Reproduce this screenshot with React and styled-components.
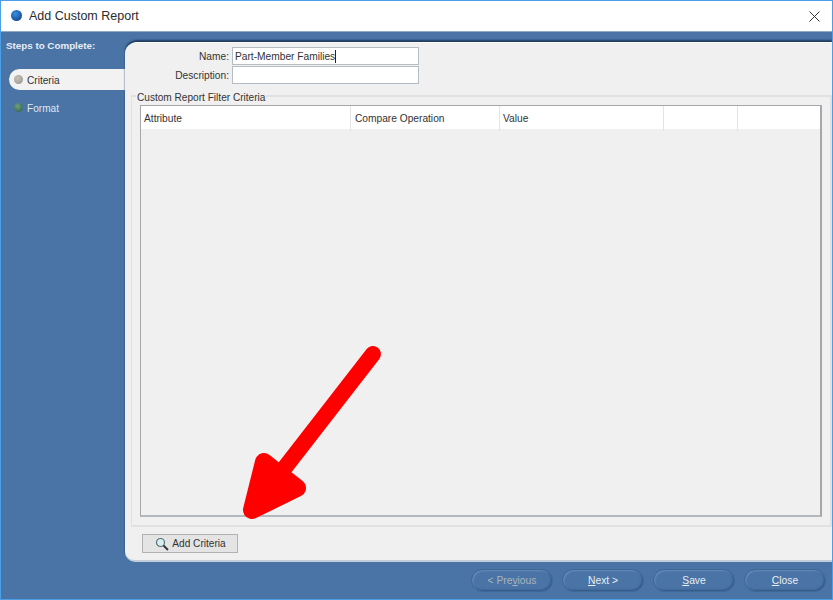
import React from 'react';
import styled, { createGlobalStyle } from 'styled-components';

const Global = createGlobalStyle`
  html, body { margin: 0; padding: 0; }
  body { font-family: "Liberation Sans", Arial, sans-serif; font-size: 11px; }
`;

const Window = styled.div`
  position: relative;
  box-sizing: border-box;
  width: 833px;
  height: 600px;
  border: 1px solid #4a9fe6;
  display: flex;
  flex-direction: column;
  background: #4a74a6;
  overflow: hidden;
`;

const TitleBar = styled.div`
  height: 30px;
  flex: none;
  background: #fff;
  display: flex;
  align-items: center;
  padding: 0 12px 0 10px;
  gap: 7px;
  font-size: 12.5px;
  color: #2b2b2b;
  border-bottom: 1px solid #8fa9c6;
`;

const AppDot = styled.span`
  width: 11px;
  height: 11px;
  border-radius: 50%;
  margin-top: -1px;
  background: radial-gradient(circle at 40% 35%, #3c8ee0, #17509c 70%, #1a3c68);
`;

const TitleText = styled.span`
  flex: 1;
`;

const Body = styled.div`
  flex: 1;
  display: flex;
  min-height: 0;
  padding-top: 10px;
`;

const Sidebar = styled.div`
  width: 124px;
  flex: none;
  padding-left: 8px;
  box-sizing: border-box;
`;

const StepsTitle = styled.div`
  color: #e6edf5;
  font-size: 9.8px;
  font-weight: bold;
  margin: -2px 0 0 -3px;
  height: 29px;
  line-height: 12px;
`;

const Step = styled.div`
  height: 21px;
  display: flex;
  align-items: center;
  gap: 4px;
  padding-left: 5px;
  margin-bottom: 7px;
  color: ${p => (p.$active ? '#333' : '#dfe7f0')};
  background: ${p => (p.$active ? '#f2f2f2' : 'transparent')};
  border-radius: 11px 0 0 11px;
  font-size: 10.1px;
`;

const StepLabel = styled.span`
  padding-top: 2px;
`;

const StepDot = styled.span`
  width: 9px;
  height: 9px;
  border-radius: 50%;
  background: ${p => (p.$active
    ? 'radial-gradient(circle at 40% 35%, #c4c2ba, #94928a)'
    : 'radial-gradient(circle at 40% 35%, #6fa080, #2b5a48)')};
`;

const Main = styled.div`
  flex: 1;
  display: flex;
  flex-direction: column;
  min-width: 0;
`;

const Panel = styled.div`
  height: 520px;
  box-sizing: border-box;
  background: #f0f0f0;
  border-radius: 12px 0 0 10px;
  border-top: 1px solid #fafafa;
  border-bottom: 2px solid #c4cedb;
  box-shadow: 0 -2px 2px #1f3a5c;
  padding: 4px 0 0 6px;
  display: flex;
  flex-direction: column;
`;

const FormRow = styled.div`
  display: flex;
  align-items: center;
  height: 18px;
  margin-bottom: 1px;
`;

const FieldLabel = styled.label`
  width: 101px;
  text-align: right;
  color: #333;
  font-size: 10.2px;
  padding-right: 3px;
  box-sizing: border-box;
`;

const Input = styled.div`
  width: 187px;
  height: 18px;
  box-sizing: border-box;
  background: #fff;
  border: 1px solid #b4bcc4;
  padding: 0 2px;
  color: #333;
  font-size: 10.2px;
  line-height: 17px;
  white-space: nowrap;
`;

const Caret = styled.span`
  display: inline-block;
  width: 1px;
  height: 13px;
  background: #222;
  vertical-align: -3px;
`;

const GroupBox = styled.fieldset`
  margin: 4px 0 0;
  padding: 2px 8px 8px;
  height: 438px;
  box-sizing: border-box;
  border: 1px solid #e1e1e1;
  border-width: 2px 2px 2px 1px;
  min-width: 0;
`;

const GroupLegend = styled.legend`
  color: #333;
  font-size: 10.1px;
  line-height: 11px;
  padding: 3px 1px 0;
  margin-left: -4px;
`;

const Table = styled.div`
  height: 412px;
  box-sizing: border-box;
  border: 1px solid #a4a8ad;
  border-right: 2px solid #a4a8ad;
  border-bottom: 2px solid #b4b8bc;
  background: #f0f0f0;
`;

const HeaderRow = styled.div`
  display: grid;
  grid-template-columns: 210px 149px 164px 74px 1fr;
  height: 23px;
  background: #fff;
`;

const HeaderCell = styled.div`
  border-right: 1px solid #e4e4e4;
  padding-left: 3px;
  color: #333;
  font-size: 10.2px;
  line-height: 25px;
  &:nth-child(2) { padding-left: 4px; }
  &:last-child { border-right: none; }
`;

const ActionBar = styled.div`
  padding: 7px 0 0 11px;
`;

const FlatButton = styled.button`
  width: 96px;
  height: 19px;
  box-sizing: border-box;
  display: flex;
  align-items: center;
  justify-content: center;
  gap: 3px;
  padding: 0 0 0 1px;
  background: #e4e4e4;
  border: 1px solid #b2b2b2;
  color: #333;
  font: 10.1px "Liberation Sans", Arial, sans-serif;
`;

const Footer = styled.div`
  flex: 1;
  display: flex;
  justify-content: flex-end;
  align-items: flex-start;
  gap: 9px;
  padding: 7px 6px 0 0;
`;

const PillButton = styled.button`
  width: 82px;
  height: 23px;
  box-sizing: border-box;
  border-radius: 11px;
  border: 1px solid #3f6896;
  background: #4a74a6;
  box-shadow: inset -1px -1px 2px #2f5585, inset 1px 1px 2px #6b90bb;
  color: ${p => (p.disabled ? '#a9b4bc' : '#e8eef5')};
  font: 10.3px "Liberation Sans", Arial, sans-serif;
  padding: 0;
  u { text-decoration: underline; }
`;

const Arrow = styled.svg`
  position: absolute;
  left: 237px;
  top: 339px;
  pointer-events: none;
`;

const columns = ['Attribute', 'Compare Operation', 'Value', '', ''];

const App = () => (
  <Window>
    <Global />
    <TitleBar>
      <AppDot />
      <TitleText>Add Custom Report</TitleText>
      <svg width="11" height="11" viewBox="0 0 11 11">
        <path d="M0.5 0.5 L10.5 10.5 M10.5 0.5 L0.5 10.5" stroke="#333" strokeWidth="1" />
      </svg>
    </TitleBar>
    <Body>
      <Sidebar>
        <StepsTitle>Steps to Complete:</StepsTitle>
        <Step $active><StepDot $active /><StepLabel>Criteria</StepLabel></Step>
        <Step><StepDot /><StepLabel>Format</StepLabel></Step>
      </Sidebar>
      <Main>
        <Panel>
          <FormRow>
            <FieldLabel>Name:</FieldLabel>
            <Input>Part-Member Families<Caret /></Input>
          </FormRow>
          <FormRow>
            <FieldLabel>Description:</FieldLabel>
            <Input />
          </FormRow>
          <GroupBox>
            <GroupLegend>Custom Report Filter Criteria</GroupLegend>
            <Table>
              <HeaderRow>
                {columns.map((c, i) => <HeaderCell key={i}>{c}</HeaderCell>)}
              </HeaderRow>
            </Table>
          </GroupBox>
          <ActionBar>
            <FlatButton>
              <svg width="14" height="14" viewBox="0 0 14 14">
                <circle cx="5.5" cy="5.5" r="4" fill="#d8efec" stroke="#55707a" strokeWidth="1.2" />
                <path d="M8.5 8.5 L13 13" stroke="#333" strokeWidth="1.8" />
              </svg>
              Add Criteria
            </FlatButton>
          </ActionBar>
        </Panel>
        <Footer>
          <PillButton disabled>&lt; Pre<u>v</u>ious</PillButton>
          <PillButton><u>N</u>ext &gt;</PillButton>
          <PillButton><u>S</u>ave</PillButton>
          <PillButton><u>C</u>lose</PillButton>
        </Footer>
      </Main>
    </Body>
    <Arrow width="150" height="185" viewBox="0 0 150 185">
      <path d="M135 14 L45 130" stroke="#ff0000" strokeWidth="16" strokeLinecap="round" fill="none" />
      <path d="M26 122 L14 170 L59 148 Z" fill="#ff0000" stroke="#ff0000" strokeWidth="18" strokeLinejoin="round" />
    </Arrow>
  </Window>
);

export default App;
